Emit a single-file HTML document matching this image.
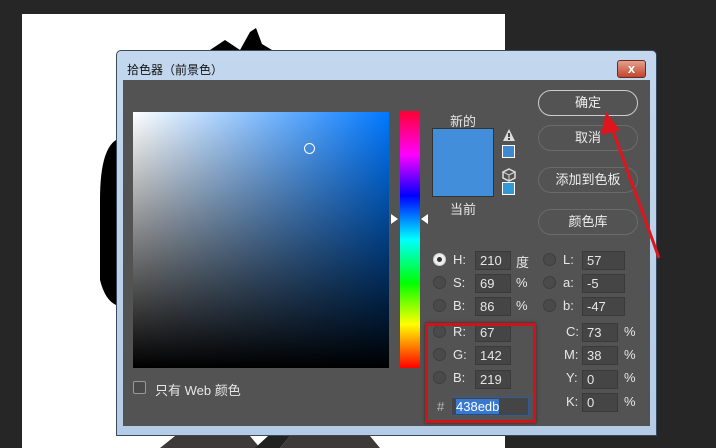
<!DOCTYPE html>
<html><head><meta charset="utf-8"><style>
*{margin:0;padding:0;box-sizing:border-box}
body{width:716px;height:448px;background:#262626;position:relative;overflow:hidden;font-family:"Liberation Sans","Noto Sans CJK SC",sans-serif;color:#e6e6e6;font-size:12px}
.a{position:absolute}
.canvas{left:22px;top:14px;width:483px;height:434px;background:#fff}
.dlg{left:116px;top:50px;width:541px;height:386px;background:linear-gradient(#c3d7ee,#b5cce7);border:1px solid #3a4a5a;border-radius:5px 5px 0 0}
.title{left:10px;top:10px;font-size:12px;color:#111}
.close{left:500px;top:9px;width:29px;height:18px;background:linear-gradient(#e4a08e,#c2452d);border:1px solid #6b2a1d;border-radius:3px;color:#fff;font-weight:bold;text-align:center;line-height:15px;font-size:13px}
.panel{left:123px;top:80px;width:527px;height:346px;background:#535353}
.field{left:133px;top:112px;width:256px;height:256px;background:linear-gradient(to top,#000,rgba(0,0,0,0)),linear-gradient(to right,#fff,#0078ff)}
.hue{left:400px;top:111px;width:20px;height:257px;background:linear-gradient(#ff0030,#ff00ff 17%,#0000ff 33%,#00ffff 50%,#00ff00 67%,#ffff00 83%,#ff0000)}
.btn{left:538px;width:100px;height:26px;border:1px solid #8a8a8a;border-radius:13px;text-align:center;line-height:24px;font-size:13px;color:#eee}
.inp{height:19px;background:#454545;border:1px solid #3a3a3a;padding-left:4px;line-height:17px;font-size:13px;color:#e6e6e6}
.rad{width:13px;height:13px;border-radius:50%;background:#4a4a4a;border:1px solid #3e3e3e}
.lb{font-size:13px;color:#e6e6e6}
</style></head><body>
<div class="a canvas"></div>
<svg class="a" style="left:0;top:0" width="716" height="448">
<polygon points="210,50 225,40 240,50 250,32 256,28 262,44 272,50" fill="#000"/>
<path d="M116,140 Q100,150 100,200 L100,280 Q105,300 116,305 Z" fill="#000"/>
<polygon points="160,448 175,436 250,436 260,448" fill="#3f3a3a"/>
<polygon points="255,448 268,436 290,436 280,448" fill="#222"/>
<polygon points="280,448 290,436 370,436 380,448" fill="#3f3a3a"/>
</svg>
<div class="a dlg"><div class="a title">拾色器（前景色）</div><div class="a close">x</div></div>
<div class="a panel"></div>
<div class="a field"></div>
<div class="a" style="left:304px;top:143px;width:11px;height:11px;border:1px solid #fff;border-radius:50%"></div>
<div class="a hue"></div>
<svg class="a" style="left:390px;top:213px" width="40" height="12"><polygon points="1,1 8,6 1,11" fill="#fff"/><polygon points="38,1 31,6 38,11" fill="#fff"/></svg>
<div class="a lb" style="left:450px;top:111px">新的</div>
<div class="a" style="left:432px;top:128px;width:62px;height:69px;background:#438edb;border:1px solid #333"></div>
<div class="a lb" style="left:450px;top:199px">当前</div>
<svg class="a" style="left:502px;top:128px" width="14" height="14"><polygon points="7,1 13,13 1,13" fill="#ddd"/><rect x="6" y="5" width="2" height="4" fill="#444"/><rect x="6" y="10" width="2" height="2" fill="#444"/></svg>
<div class="a" style="left:502px;top:145px;width:13px;height:13px;background:#3f87d1;border:1px solid #fff"></div>
<svg class="a" style="left:502px;top:168px" width="14" height="14"><polygon points="7,1 13,4 13,10 7,13 1,10 1,4" fill="none" stroke="#ddd" stroke-width="1.5"/><path d="M1,4 L7,7 L13,4 M7,7 L7,13" stroke="#ddd" fill="none"/></svg>
<div class="a" style="left:502px;top:182px;width:13px;height:13px;background:#3399d6;border:1px solid #fff"></div>
<div class="a btn" style="top:90px;border-color:#ccc">确定</div>
<div class="a btn" style="top:125px;border-color:#6a6a6a">取消</div>
<div class="a btn" style="top:167px;border-color:#6a6a6a">添加到色板</div>
<div class="a btn" style="top:209px;border-color:#6a6a6a">颜色库</div>

<div class="a rad" style="left:433px;top:253px;background:#eee;border-color:#ccc"><div style="width:5px;height:5px;background:#333;border-radius:50%;margin:3px"></div></div>
<div class="a lb" style="left:453px;top:252px">H:</div><div class="a inp" style="left:475px;top:251px;width:36px">210</div><div class="a lb" style="left:516px;top:252px">度</div>
<div class="a rad" style="left:433px;top:276px"></div><div class="a lb" style="left:453px;top:275px">S:</div><div class="a inp" style="left:475px;top:274px;width:36px">69</div><div class="a lb" style="left:516px;top:275px">%</div>
<div class="a rad" style="left:433px;top:299px"></div><div class="a lb" style="left:453px;top:298px">B:</div><div class="a inp" style="left:475px;top:297px;width:36px">86</div><div class="a lb" style="left:516px;top:298px">%</div>
<div class="a rad" style="left:543px;top:253px"></div><div class="a lb" style="left:563px;top:252px">L:</div><div class="a inp" style="left:582px;top:251px;width:43px">57</div>
<div class="a rad" style="left:543px;top:276px"></div><div class="a lb" style="left:563px;top:275px">a:</div><div class="a inp" style="left:582px;top:274px;width:43px">-5</div>
<div class="a rad" style="left:543px;top:299px"></div><div class="a lb" style="left:563px;top:298px">b:</div><div class="a inp" style="left:582px;top:297px;width:43px">-47</div>

<div class="a rad" style="left:433px;top:325px"></div><div class="a lb" style="left:453px;top:324px">R:</div><div class="a inp" style="left:475px;top:323px;width:36px">67</div>
<div class="a rad" style="left:433px;top:348px"></div><div class="a lb" style="left:453px;top:347px">G:</div><div class="a inp" style="left:475px;top:346px;width:36px">142</div>
<div class="a rad" style="left:433px;top:371px"></div><div class="a lb" style="left:453px;top:370px">B:</div><div class="a inp" style="left:475px;top:370px;width:36px">219</div>
<div class="a lb" style="left:437px;top:399px;color:#bbb">#</div>
<div class="a inp" style="left:451px;top:397px;width:78px;border-color:#2d5e9a"><span style="background:#3878d0;color:#fff">438edb</span></div>
<div class="a" style="left:425px;top:323px;width:111px;height:100px;border:3px solid #d0121b;box-shadow:0 0 3px rgba(0,0,0,.5)"></div>

<div class="a lb" style="left:566px;top:324px">C:</div><div class="a inp" style="left:582px;top:323px;width:36px">73</div><div class="a lb" style="left:624px;top:324px">%</div>
<div class="a lb" style="left:564px;top:347px">M:</div><div class="a inp" style="left:582px;top:346px;width:36px">38</div><div class="a lb" style="left:624px;top:347px">%</div>
<div class="a lb" style="left:566px;top:370px">Y:</div><div class="a inp" style="left:582px;top:370px;width:36px">0</div><div class="a lb" style="left:624px;top:370px">%</div>
<div class="a lb" style="left:566px;top:394px">K:</div><div class="a inp" style="left:582px;top:393px;width:36px">0</div><div class="a lb" style="left:624px;top:394px">%</div>

<div class="a" style="left:133px;top:381px;width:13px;height:13px;border:1px solid #999;border-radius:2px;background:#4a4a4a"></div>
<div class="a lb" style="left:155px;top:380px">只有 Web 颜色</div>

<svg class="a" style="left:0;top:0" width="716" height="448"><line x1="659" y1="258" x2="612" y2="128" stroke="#e0141c" stroke-width="3"/><polygon points="606,112 601,135 620,130" fill="#e0141c"/></svg>
</body></html>
